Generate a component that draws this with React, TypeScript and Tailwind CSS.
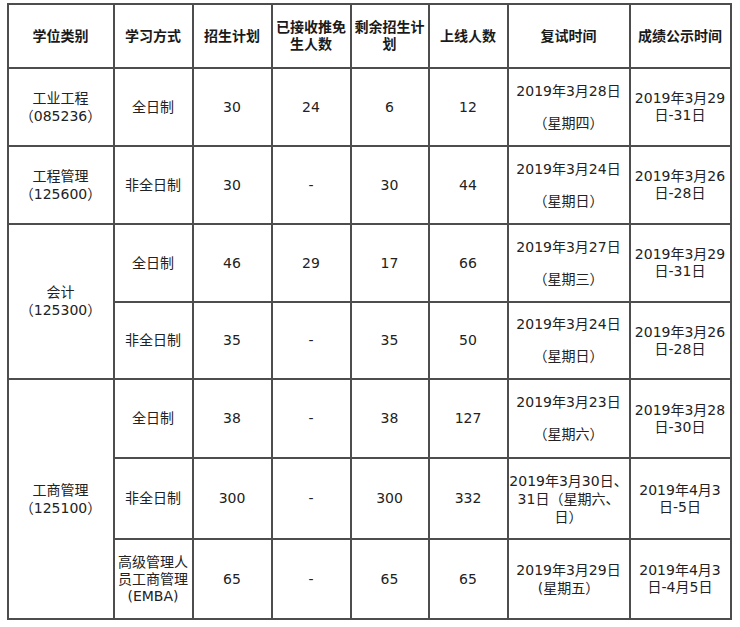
import React from 'react';

const font = { fontFamily: '"DejaVu Sans", "Noto Sans CJK SC", sans-serif' };

const td = 'border-2 border-[#4d4d4d] text-center align-middle p-0 text-[14px] leading-[17px] text-[#222]';
const th = 'border-2 border-[#4d4d4d] text-center align-middle p-0 text-[14px] leading-[17px] font-bold text-[#1a1a1a]';

// full-width punctuation comes from the CJK font, digits from DejaVu
function Txt({ s }: { s: string }) {
  const parts = s.split(/([（）、])/).filter(Boolean);
  return (
    <>
      {parts.map((p, i) =>
        /^[（）、]$/.test(p) ? (
          <span key={i} className="font-['Noto_Sans_CJK_SC',sans-serif]">
            {p}
          </span>
        ) : (
          <React.Fragment key={i}>{p}</React.Fragment>
        )
      )}
    </>
  );
}

function Lines({ lines, gap = false }: { lines: string[]; gap?: boolean }) {
  return (
    <div className={gap ? 'leading-[31px] whitespace-nowrap' : 'whitespace-nowrap'}>
      {lines.map((l, i) => (
        <div key={i}>
          <Txt s={l} />
        </div>
      ))}
    </div>
  );
}

type Row = {
  h: string;
  cat?: { lines: string[]; span: number };
  mode: string[];
  plan: string;
  exempt: string;
  left: string;
  online: string;
  retest: string[];
  retestGap: boolean;
  publish: string[];
};

const rows: Row[] = [
  {
    h: 'h-[78px]',
    cat: { lines: ['工业工程', '（085236）'], span: 1 },
    mode: ['全日制'],
    plan: '30',
    exempt: '24',
    left: '6',
    online: '12',
    retest: ['2019年3月28日', '（星期四）'],
    retestGap: true,
    publish: ['2019年3月29', '日-31日'],
  },
  {
    h: 'h-[78px]',
    cat: { lines: ['工程管理', '（125600）'], span: 1 },
    mode: ['非全日制'],
    plan: '30',
    exempt: '-',
    left: '30',
    online: '44',
    retest: ['2019年3月24日', '（星期日）'],
    retestGap: true,
    publish: ['2019年3月26', '日-28日'],
  },
  {
    h: 'h-[78px]',
    cat: { lines: ['会计', '（125300）'], span: 2 },
    mode: ['全日制'],
    plan: '46',
    exempt: '29',
    left: '17',
    online: '66',
    retest: ['2019年3月27日', '（星期三）'],
    retestGap: true,
    publish: ['2019年3月29', '日-31日'],
  },
  {
    h: 'h-[77px]',
    mode: ['非全日制'],
    plan: '35',
    exempt: '-',
    left: '35',
    online: '50',
    retest: ['2019年3月24日', '（星期日）'],
    retestGap: true,
    publish: ['2019年3月26', '日-28日'],
  },
  {
    h: 'h-[79px]',
    cat: { lines: ['工商管理', '（125100）'], span: 3 },
    mode: ['全日制'],
    plan: '38',
    exempt: '-',
    left: '38',
    online: '127',
    retest: ['2019年3月23日', '（星期六）'],
    retestGap: true,
    publish: ['2019年3月28', '日-30日'],
  },
  {
    h: 'h-[81px]',
    mode: ['非全日制'],
    plan: '300',
    exempt: '-',
    left: '300',
    online: '332',
    retest: ['2019年3月30日、', '31日（星期六、', '日）'],
    retestGap: false,
    publish: ['2019年4月3', '日-5日'],
  },
  {
    h: 'h-[80px]',
    mode: ['高级管理人', '员工商管理', '(EMBA)'],
    plan: '65',
    exempt: '-',
    left: '65',
    online: '65',
    retest: ['2019年3月29日', '(星期五）'],
    retestGap: false,
    publish: ['2019年4月3', '日-4月5日'],
  },
];

export default function App() {
  return (
    <div className="min-h-screen bg-white pt-[3px] pl-[6.5px]" style={font}>
      <table className="border-collapse table-fixed w-[723px]">
        <colgroup>
          <col className="w-[106px]" />
          <col className="w-[79px]" />
          <col className="w-[79px]" />
          <col className="w-[79px]" />
          <col className="w-[78px]" />
          <col className="w-[79px]" />
          <col className="w-[122px]" />
          <col className="w-[101px]" />
        </colgroup>
        <thead>
          <tr className="h-[64px]">
            <th className={th}>学位类别</th>
            <th className={th}>学习方式</th>
            <th className={th}>招生计划</th>
            <th className={th}>
              <Lines lines={['已接收推免', '生人数']} />
            </th>
            <th className={th}>
              <Lines lines={['剩余招生计', '划']} />
            </th>
            <th className={th}>上线人数</th>
            <th className={th}>复试时间</th>
            <th className={th}>成绩公示时间</th>
          </tr>
        </thead>
        <tbody>
          {rows.map((r, i) => (
            <tr key={i} className={r.h}>
              {r.cat && (
                <td className={td} rowSpan={r.cat.span}>
                  <Lines lines={r.cat.lines} />
                </td>
              )}
              <td className={td}>
                <Lines lines={r.mode} />
              </td>
              <td className={td}>{r.plan}</td>
              <td className={td}>{r.exempt}</td>
              <td className={td}>{r.left}</td>
              <td className={td}>{r.online}</td>
              <td className={td}>
                <Lines lines={r.retest} gap={r.retestGap} />
              </td>
              <td className={td}>
                <Lines lines={r.publish} />
              </td>
            </tr>
          ))}
        </tbody>
      </table>
    </div>
  );
}
